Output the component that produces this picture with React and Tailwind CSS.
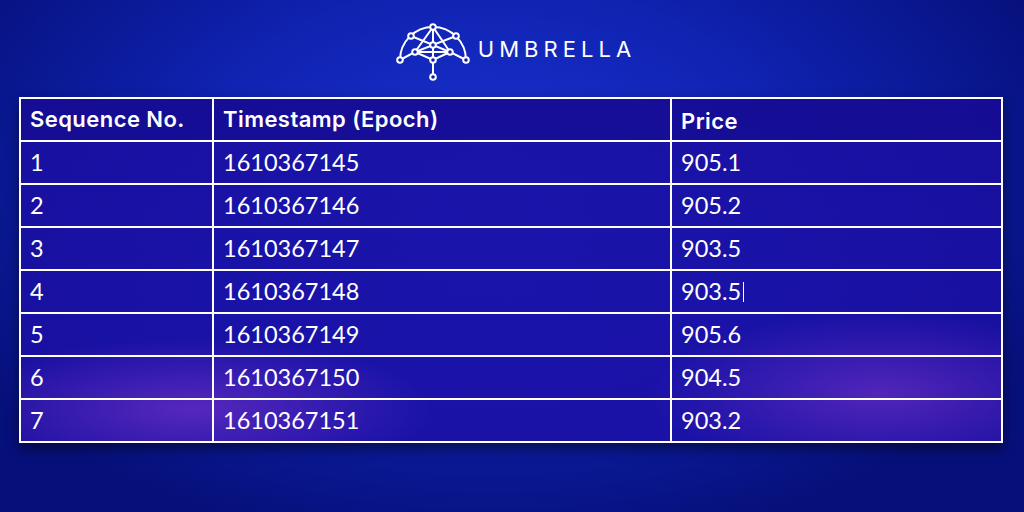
import React from "react";

const rows = [
  ["1", "1610367145", "905.1"],
  ["2", "1610367146", "905.2"],
  ["3", "1610367147", "903.5"],
  ["4", "1610367148", "903.5", true],
  ["5", "1610367149", "905.6"],
  ["6", "1610367150", "904.5"],
  ["7", "1610367151", "903.2"],
];

function UmbrellaMark() {
  const nodes = [
    [37, 6], [15, 15], [60, 15], [37, 24], [19, 31], [54, 31],
    [4, 39], [37, 39], [70, 39], [37, 56],
  ];
  return (
    <svg width="76" height="62" viewBox="0 0 76 62" fill="none" stroke="white" strokeWidth="2">
      {/* dome */}
      <path d="M4 39 A33 33 0 0 1 70 39" />
      {/* inner network */}
      <path d="M37 6 L19 31 L4 39 M37 6 L54 31 L70 39 M19 31 L54 31" />
      <path d="M15 15 L37 24 L60 15 M19 31 L37 24 L54 31" />
      <path d="M37 6 L37 56 M19 31 L37 39 L54 31" />
      {nodes.map(([x, y], i) => (
        <circle key={i} cx={x} cy={y} r="2.8" fill="#0f1fa8" />
      ))}
    </svg>
  );
}

export default function App() {
  return (
    <div
      className="w-[1024px] h-[512px] overflow-hidden flex flex-col bg-[#0a1690] bg-[radial-gradient(ellipse_620px_380px_at_48%_34%,#1a32d0,#0f22b0_50%,#06107a_100%)]"
      style={{ fontFamily: "Lato, 'Open Sans', sans-serif" }}
    >
      {/* Logo */}
      <div className="flex items-center justify-center gap-[6px] pt-[22px] h-[97px] pb-[15px] pl-[8px]">
        <UmbrellaMark />
        <span
          className="text-white text-[22px] font-normal tracking-[0.23em] mt-[-6px]"
          style={{ fontFamily: "Inter, 'Open Sans', sans-serif" }}
        >
          UMBRELLA
        </span>
      </div>

      {/* Table */}
      <div className="ml-[19px] w-[984px] border-2 border-white shadow-[0_6px_12px_rgba(0,0,0,0.45)] text-white bg-[radial-gradient(ellipse_240px_70px_at_170px_310px,rgba(200,80,235,0.35),transparent),radial-gradient(ellipse_230px_80px_at_860px_295px,rgba(200,80,235,0.32),transparent),linear-gradient(rgba(26,14,160,0.85),rgba(30,16,170,0.8))]">
        <div
          className="grid grid-cols-[191px_458px_1fr] h-[41px] bg-[#14098a]/50 text-[22px] font-semibold tracking-[0.02em]"
          style={{ fontFamily: "Inter, 'Open Sans', sans-serif" }}
        >
          <div className="flex items-center pl-[9px]">Sequence No.</div>
          <div className="flex items-center pl-[9px] border-l-2 border-white">Timestamp (Epoch)</div>
          <div className="flex items-center pl-[9px] pt-[3px] border-l-2 border-white">Price</div>
        </div>
        {rows.map(([seq, ts, price, cursor]) => (
          <div
            key={seq}
            className="grid grid-cols-[191px_458px_1fr] h-[43px] border-t-2 border-white text-[23.5px]"
          >
            <div className="flex items-center pl-[9px]">{seq}</div>
            <div className="flex items-center pl-[9px] border-l-2 border-white">{ts}</div>
            <div className="flex items-center pl-[9px] border-l-2 border-white">
              {price}
              {cursor && <span className="ml-[2px] w-px h-[20px] bg-white" />}
            </div>
          </div>
        ))}
      </div>
    </div>
  );
}
